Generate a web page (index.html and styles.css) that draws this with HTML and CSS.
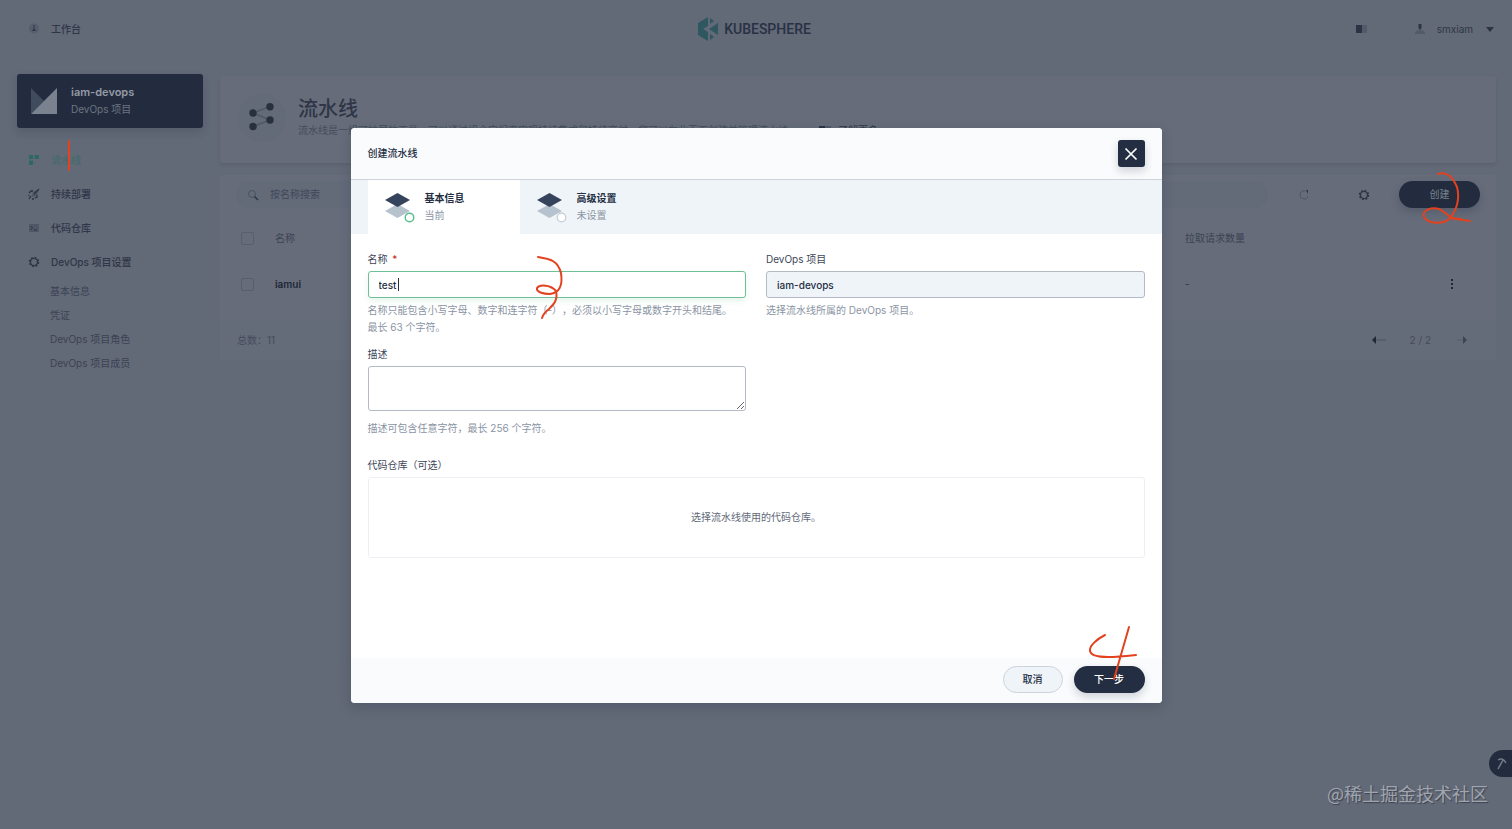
FILE: index.html
```html
<!DOCTYPE html>
<html lang="zh-CN">
<head>
<meta charset="utf-8">
<title>KubeSphere</title>
<link rel="stylesheet" href="styles.css">
</head>
<body>
<header class="topbar">
  <div class="topbar-side">
    <a class="workbench" href="#">
      <svg class="icon" viewBox="0 0 14 14"><circle cx="7" cy="6.500" r="5" fill="#565e6d"/><path d="M7 3v4l-1.500 1.500h3L7 7" fill="#303848" stroke="#303848"/></svg>
      工作台
    </a>
  </div>
  <a class="brand" href="#">
    <svg class="brand-mark" viewBox="0 0 22 24"><path d="M11 0v9l-5 3 5 3v9L1 18V6zM13 1l4 3-4 3zM21 6v12l-9-6zM13 17l4 3-4 3z" fill="#2f575f"/></svg>
    KUBESPHERE
  </a>
  <div class="topbar-side topbar-right">
    <button class="icon-button" type="button" aria-label="文档"><svg class="icon" viewBox="0 0 14 14"><path d="M1 3h6v8H1z" fill="#2b3344"/><path d="M7 3h5v8H7z" fill="#535a69"/></svg></button>
    <button class="user" type="button">
      <svg class="icon" viewBox="0 0 14 14"><path d="M2 12c0-3 2-4 5-4s5 1 5 4z" fill="#535a69"/><path d="M5.500 2h3v4L7 8 5.500 6z" fill="#2b3344"/></svg>
      <span>smxiam</span>
      <svg class="chevron" viewBox="0 0 8 5"><path d="M0 0h8L4 5z" fill="#2b3344"/></svg>
    </button>
  </div>
</header>

<div class="page">
  <aside class="sidebar">
    <div class="project">
      <svg class="project-logo" viewBox="0 0 26 26"><path d="M0 0l13 13L0 26z" fill="#404b5e"/><path d="M26 0v26H0z" fill="#7b828f"/></svg>
      <div>
        <strong class="project-name">iam-devops</strong>
        <div class="project-kind">DevOps 项目</div>
      </div>
    </div>
    <nav class="nav">
      <a class="nav-item active" href="#">
        <svg class="icon" viewBox="0 0 14 14"><path d="M2 2h4v4H2zM7.500 2h4.500v4H7.500zM2 7.500h4V12H2z" fill="#2f6863"/><path d="M6 4h2M4 6v2M6 10h3" stroke="#44716f"/></svg>
        流水线
        <svg class="mark mark-one" viewBox="64 138 10 36"><path d="M69 141v29"/></svg>
      </a>
      <a class="nav-item" href="#">
        <svg class="icon" viewBox="0 0 14 14"><path d="M5 9l1-4 6-3-2 6-4 2z" fill="#4d5564"/><path d="M2 6l2-2h2M8 11l2-1V8M2 12l2-3M7 7l5-5M2 9V8M5 12h2" fill="none" stroke="#2b3344" stroke-width="1.300"/></svg>
        持续部署
      </a>
      <a class="nav-item" href="#">
        <svg class="icon" viewBox="0 0 14 14"><path d="M2 3h10v8H2z" fill="#505868"/><path d="M3.500 5l2 2-2 2M7 9h3" fill="none" stroke="#2b3344"/></svg>
        代码仓库
      </a>
      <a class="nav-item" href="#">
        <svg class="icon" viewBox="0 0 14 14"><circle cx="7" cy="7" r="4.500" fill="none" stroke="#2b3344" stroke-width="1.500" stroke-dasharray="1.767 1.767"/><circle cx="7" cy="7" r="3.500" fill="none" stroke="#2b3344" stroke-width="1.200"/></svg>
        DevOps 项目设置
      </a>
      <div class="subnav">
        <a href="#">基本信息</a>
        <a href="#">凭证</a>
        <a href="#">DevOps 项目角色</a>
        <a href="#">DevOps 项目成员</a>
      </div>
    </nav>
  </aside>

  <main class="main">
    <section class="banner">
      <div class="banner-icon">
        <svg class="banner-graph" viewBox="0 0 28 30"><path d="M5 10l17-6.500M5 10l17 7M5 23.500l17-6.500" stroke="#505867" stroke-width="1.500"/><g fill="#28303f"><circle cx="5" cy="10" r="3.700"/><circle cx="22" cy="3.700" r="3.700"/><circle cx="22" cy="17" r="3.700"/><circle cx="5" cy="23.500" r="3.700"/></g></svg>
      </div>
      <div>
        <h1>流水线</h1>
        <p>流水线是一组可扩展的工具，可以通过组合它们来实现持续集成和持续交付。您可以在此页面创建并管理流水线。
          <a class="more" href="#"><svg class="icon" viewBox="0 0 14 14"><path d="M1 3h6v8H1z" fill="#2b3344"/><path d="M7 3h6v8H7z" fill="#535a69"/></svg>了解更多</a></p>
      </div>
    </section>

    <section class="list">
      <div class="toolbar">
        <label class="search">
          <svg class="icon" viewBox="0 0 14 14"><circle cx="6" cy="6" r="3.500" fill="none" stroke="#4b5363"/><path d="M8.500 8.500L12 12" stroke="#2b3344" stroke-width="1.500"/></svg>
          <input type="text" placeholder="按名称搜索" aria-label="按名称搜索">
        </label>
        <button class="tool" type="button" aria-label="刷新"><svg class="icon" viewBox="0 0 14 14"><path d="M8 3a4 4 0 1 0 3 5" fill="none" stroke="#4c5464"/><path d="M9 2h2v4z" fill="#2b3344"/></svg></button>
        <button class="tool" type="button" aria-label="设置"><svg class="icon" viewBox="0 0 14 14"><circle cx="7" cy="7" r="4.500" fill="none" stroke="#2b3344" stroke-width="1.500" stroke-dasharray="1.767 1.767"/><circle cx="7" cy="7" r="3.500" fill="none" stroke="#2b3344" stroke-width="1.200"/></svg></button>
        <div class="create-wrap">
          <button class="create" type="button">创建</button>
          <svg class="mark mark-two" viewBox="1418 168 58 58"><path d="M1438 174C1448 171 1453 178 1457 187C1460 198 1457 210 1450 218C1444 225 1428 224 1424 217C1421 210 1432 207 1439 209C1446 212 1449 218 1456 219L1470 221"/><path d="M1450 218l11 1"/></svg>
        </div>
      </div>
      <table>
        <thead>
          <tr><th class="col-check"><input type="checkbox" aria-label="全选"></th><th>名称</th><th class="col-pr">拉取请求数量</th><th class="col-more"></th></tr>
        </thead>
        <tbody>
          <tr><td><input type="checkbox" aria-label="选择 iamui"></td><td><a class="row-name" href="#">iamui</a></td><td>-</td><td><button class="dots" type="button" aria-label="更多"><svg viewBox="0 0 4 12"><path d="M1 1h2v2H1zM1 5h2v2H1zM1 9h2v2H1z" fill="#202838"/></svg></button></td></tr>
        </tbody>
      </table>
      <div class="list-footer">
        <span>总数：11</span>
        <div class="pager">
          <button type="button" aria-label="上一页"><svg class="icon" viewBox="0 0 14 14"><path d="M4 7h10" stroke="#4b5363"/><path d="M0 7l4-4v8z" fill="#202838"/></svg></button>
          <span>2 / 2</span>
          <button type="button" aria-label="下一页"><svg class="icon" viewBox="0 0 14 14"><path d="M2 7h7" stroke="#555c6b"/><path d="M12 7L8 3v8z" fill="#3c4454"/></svg></button>
        </div>
      </div>
    </section>
  </main>
</div>

<div class="overlay">
  <form class="dialog" role="dialog" aria-labelledby="dialog-title">
    <div class="dialog-head">
      <h2 id="dialog-title">创建流水线</h2>
      <button class="close" type="button" aria-label="关闭"><svg viewBox="0 0 14 14"><path d="M1.500 1.500l11 11M12.500 1.500l-11 11" stroke="#fff" stroke-width="1.700"/></svg></button>
    </div>
    <div class="steps">
      <div class="step current">
        <svg class="step-icon" viewBox="0 0 32 32"><path d="M1 20l12.500-7L26 20l-12.500 7z" fill="#b6c2cd"/><path d="M1 9l12.500-7L26 9l-12.500 7z" fill="#36435c"/><circle cx="25.500" cy="26.500" r="4.300" fill="#fff" stroke="#55bc8a" stroke-width="1.400"/></svg>
        <div><strong>基本信息</strong><span>当前</span></div>
      </div>
      <div class="step">
        <svg class="step-icon" viewBox="0 0 32 32"><path d="M1 20l12.500-7L26 20l-12.500 7z" fill="#b6c2cd"/><path d="M1 9l12.500-7L26 9l-12.500 7z" fill="#36435c"/><circle cx="25.500" cy="26.500" r="4.300" fill="#fff" stroke="#c3cbd4" stroke-width="1.200"/></svg>
        <div><strong>高级设置</strong><span>未设置</span></div>
      </div>
    </div>
    <div class="dialog-body">
      <div class="fields">
        <div class="field">
          <label for="name">名称 <span class="required">*</span></label>
          <div class="input-wrap">
            <input id="name" class="focused" type="text" value="test">
            <span class="caret"></span>
          </div>
          <p class="hint">名称只能包含小写字母、数字和连字符（-），必须以小写字母或数字开头和结尾。最长 63 个字符。</p>
          <svg class="mark mark-three" viewBox="530 250 40 74"><path d="M538 257C551 259 558 261 561 273C563 286 559 293 550 294C543 294 536 292 537 288C540 284 551 285 556 291C558 300 554 304 549 309C545 312 543 315 542 318"/></svg>
        </div>
        <div class="field">
          <label for="project">DevOps 项目</label>
          <input id="project" type="text" value="iam-devops" readonly>
          <p class="hint">选择流水线所属的 DevOps 项目。</p>
        </div>
        <div class="field">
          <label for="desc">描述</label>
          <textarea id="desc"></textarea>
          <p class="hint hint-desc">描述可包含任意字符，最长 256 个字符。</p>
        </div>
      </div>
      <div class="repo">
        <div class="repo-label">代码仓库（可选）</div>
        <button class="repo-box" type="button">选择流水线使用的代码仓库。</button>
      </div>
    </div>
    <div class="dialog-foot">
      <button class="cancel" type="button">取消</button>
      <div class="next-wrap">
        <button class="next" type="button">下一步</button>
        <svg class="mark mark-four" viewBox="1084 622 58 62"><path d="M1105 635C1097 639 1089 646 1090 651C1091 656 1099 657 1108 657C1119 657 1127 656 1136 655M1129 627L1114 679"/></svg>
      </div>
    </div>
  </form>
</div>

<button class="helper" type="button" aria-label="工具箱"><svg class="icon" viewBox="0 0 14 14"><path d="M9 3L4 12M4 3c3-2 6-1 8 3" fill="none" stroke="#737b89" stroke-width="1.500"/></svg></button>
<div class="watermark">@稀土掘金技术社区</div>
</body>
</html>
```
FILE: styles.css
```css
* {
  box-sizing: border-box;
}

body {
  margin: 0;
  min-height: 100vh;
  background: #626977;
  color: #2e3647;
  font-family: Inter, "Noto Sans CJK SC", sans-serif;
  font-size: 10px;
  line-height: 17px;
  text-spacing-trim: space-all;
  overflow: hidden;
}

a {
  color: inherit;
  text-decoration: none;
}

button {
  padding: 0;
  border: 0;
  background: none;
  color: inherit;
  font: inherit;
}

input,
textarea {
  font: inherit;
  color: inherit;
}

h1,
h2,
p {
  margin: 0;
}

.icon {
  display: block;
  flex: none;
  width: 14px;
  height: 14px;
}

/* Top bar */
.topbar {
  display: flex;
  align-items: center;
  height: 58px;
  padding: 0 18px 0 14px;
}

.topbar-side {
  display: flex;
  flex: 1;
  align-items: center;
}

.topbar-right {
  justify-content: flex-end;
  gap: 44px;
}

.workbench {
  display: flex;
  align-items: center;
  gap: 10px;
  padding-left: 13px;
  font-weight: 500;
}

.brand {
  display: flex;
  align-items: center;
  gap: 5px;
  font-family: Roboto, sans-serif;
  font-size: 14px;
  font-weight: 500;
  color: #293144;
}

.brand-mark {
  width: 22px;
  height: 24px;
}

.user {
  display: flex;
  align-items: center;
  gap: 10px;
}

.chevron {
  width: 8px;
  height: 5px;
  margin-left: 3px;
}

/* Page */
.page {
  display: flex;
  gap: 17px;
  padding: 16px 16px 0 17px;
}

.sidebar {
  flex: none;
  width: 186px;
}

.project {
  display: flex;
  align-items: center;
  gap: 14px;
  height: 54px;
  padding: 0 14px;
  border-radius: 3px;
  background: #232c3e;
  box-shadow: 0 4px 8px rgba(35, 44, 62, 0.2);
  color: #6c7482;
}

.project-logo {
  width: 26px;
  height: 26px;
}

.project-name {
  display: block;
  color: #949aa4;
  font-size: 11px;
  font-weight: 600;
}

.nav {
  padding: 15px 0 0 10px;
}

.nav-item {
  position: relative;
  display: flex;
  align-items: center;
  gap: 10px;
  height: 34px;
  font-weight: 500;
}

.nav-item.active {
  color: #426b70;
}

.subnav {
  display: flex;
  flex-direction: column;
  padding-left: 23px;
  color: #3b4354;
  line-height: 24px;
}

.main {
  flex: 1;
  min-width: 0;
  padding-top: 2px;
}

.banner {
  display: flex;
  align-items: center;
  gap: 12px;
  height: 87px;
  padding: 0 18px 4px;
  border-radius: 3px;
  background: #666c7a;
  box-shadow: 0 2px 3px rgba(50, 60, 78, 0.16);
}

.banner-icon {
  display: grid;
  place-items: center;
  flex: none;
  width: 48px;
  height: 48px;
  border-radius: 24px;
  background: #636a78;
}

.banner-graph {
  width: 28px;
  height: 30px;
}

.banner h1 {
  font-size: 20px;
  font-weight: 500;
  line-height: 25px;
}

.banner p {
  display: flex;
  gap: 20px;
  color: #444c5c;
}

.more {
  display: flex;
  align-items: center;
  gap: 6px;
  color: #2e3647;
}

.list {
  margin-top: 12px;
  border-radius: 3px;
  background: #666c7a;
}

.toolbar {
  display: flex;
  align-items: center;
  padding: 6px 16px;
}

.search {
  display: flex;
  flex: 1;
  align-items: center;
  gap: 10px;
  height: 27px;
  margin-right: 6px;
  padding: 0 10px;
  border-radius: 14px;
  background: #636a78;
}

.search input {
  flex: 1;
  padding: 0;
  border: 0;
  background: none;
}

.search input::placeholder {
  color: #404858;
  opacity: 1;
}

.tool {
  display: grid;
  place-items: center;
  width: 60px;
  height: 27px;
}

.create-wrap,
.next-wrap {
  position: relative;
}

.create {
  display: block;
  width: 81px;
  height: 27px;
  margin-left: 5px;
  border-radius: 14px;
  background: #232c3e;
  box-shadow: 0 4px 8px rgba(35, 44, 62, 0.25);
  color: #7e8591;
}

table {
  width: 100%;
  border-collapse: collapse;
  table-layout: fixed;
}

th,
td {
  padding: 0;
  text-align: left;
}

th {
  height: 48px;
  color: #3b4354;
  font-weight: 400;
}

td {
  height: 44px;
}

.col-check {
  width: 55px;
}

.col-pr {
  width: 256px;
}

.col-more {
  width: 55px;
}

input[type="checkbox"] {
  display: block;
  appearance: none;
  width: 13px;
  height: 13px;
  margin: 0 0 0 21px;
  border: 1px solid #575e6d;
  border-radius: 2px;
}

.row-name {
  color: #202838;
  font-weight: 600;
}

.dots {
  display: block;
  width: 4px;
  height: 12px;
  margin-left: 9px;
}

.dots svg {
  display: block;
}

.list-footer {
  display: flex;
  align-items: center;
  justify-content: space-between;
  height: 40px;
  margin-top: 14px;
  padding: 0 27px 0 17px;
  background: #646b79;
  color: #444c5c;
}

.pager {
  display: flex;
  align-items: center;
  gap: 24px;
}

/* Dialog */
.overlay {
  position: absolute;
  inset: 0;
  display: grid;
  place-items: center;
  padding-top: 2px;
}

.dialog {
  width: 100%;
  max-width: 811px;
  border-radius: 4px;
  background: #fff;
  box-shadow: 0 4px 12px rgba(36, 46, 66, 0.25);
  overflow: hidden;
  color: #3d4659;
}

.dialog-head {
  display: flex;
  align-items: center;
  justify-content: space-between;
  height: 52px;
  padding: 0 17px;
  border-bottom: 1px solid #ccd3db;
  background: #f9fbfd;
}

.dialog-head h2 {
  color: #242e42;
  font-size: 10px;
  font-weight: 500;
}

.close {
  display: grid;
  place-items: center;
  width: 27px;
  height: 27px;
  border-radius: 3px;
  background: #242e42;
  box-shadow: 0 4px 8px rgba(36, 46, 66, 0.2);
}

.close svg {
  width: 14px;
  height: 14px;
}

.steps {
  display: flex;
  height: 54px;
  padding-left: 17px;
  background: #eff4f9;
}

.step {
  display: flex;
  align-items: center;
  gap: 9px;
  width: 152px;
  padding-left: 16px;
}

.step.current {
  background: #fff;
}

.step-icon {
  width: 32px;
  height: 32px;
}

.step strong,
.step span {
  display: block;
}

.step strong {
  color: #242e42;
  font-weight: 600;
}

.step span {
  color: #8a94a3;
}

.dialog-body {
  min-height: 424px;
  padding: 17px;
}

.fields {
  display: grid;
  grid-template-columns: 1fr 1fr;
  gap: 10px 20px;
}

.field {
  position: relative;
}

.field label,
.repo-label {
  display: block;
  margin-bottom: 4px;
  line-height: 16px;
}

.required {
  margin-left: 2px;
  color: #ca2621;
}

.input-wrap {
  position: relative;
}

.field input,
.field textarea {
  display: block;
  width: 100%;
  border: 1px solid #b3bac4;
  border-radius: 3px;
  background: #fff;
}

.field input {
  height: 27px;
  padding: 0 10px;
  color: #242e42;
  font-weight: 500;
}

.field input:read-only {
  background: #eff4f9;
}

.field .focused {
  border-color: #6fbf97;
  box-shadow: 0 3px 6px rgba(85, 188, 138, 0.15);
}

.caret {
  position: absolute;
  top: 7px;
  left: 30px;
  width: 1px;
  height: 13px;
  background: #242e42;
}

.field textarea {
  height: 45px;
  resize: vertical;
}

.hint {
  margin-top: 4px;
  padding-right: 8px;
  color: #8a94a3;
}

.hint-desc {
  margin-top: 9px;
}

.repo {
  margin-top: 20px;
}

.repo-box {
  display: block;
  width: 100%;
  height: 81px;
  border: 1px solid #eceff3;
  border-radius: 3px;
  color: #5f6979;
}

.dialog-foot {
  display: flex;
  align-items: center;
  justify-content: flex-end;
  gap: 11px;
  height: 45px;
  padding: 0 17px 2px;
  background: #f9fbfd;
}

.cancel,
.next {
  display: block;
  height: 27px;
  border-radius: 14px;
  font-weight: 500;
}

.cancel {
  width: 60px;
  border: 1px solid #ccd3db;
  background: #eff4f9;
  color: #242e42;
}

.next {
  width: 71px;
  background: #242e42;
  box-shadow: 0 4px 8px rgba(36, 46, 66, 0.2);
  color: #fff;
}

/* Handwritten step numbers */
.mark {
  position: absolute;
  fill: none;
  stroke: #e2421f;
  stroke-width: 2px;
  stroke-linecap: round;
  pointer-events: none;
}

.mark-one {
  top: -5px;
  left: 37px;
  width: 10px;
  height: 36px;
}

.mark-two {
  top: -13px;
  left: 24px;
  width: 58px;
  height: 58px;
}

.mark-three {
  top: -1px;
  left: 162px;
  width: 40px;
  height: 74px;
}

.mark-four {
  top: -44px;
  left: 10px;
  width: 58px;
  height: 62px;
}

/* Floating items */
.helper {
  position: absolute;
  right: 0;
  bottom: 52px;
  display: grid;
  place-items: center;
  width: 23px;
  height: 27px;
  border-radius: 14px 0 0 14px;
  background: #232c3e;
}

.watermark {
  position: absolute;
  right: 24px;
  bottom: 23px;
  color: #a0a5af;
  font-family: "Noto Sans CJK SC", sans-serif;
  font-size: 18px;
  line-height: 26px;
  text-shadow: 1px 1px 1px #3c4350;
}
```
